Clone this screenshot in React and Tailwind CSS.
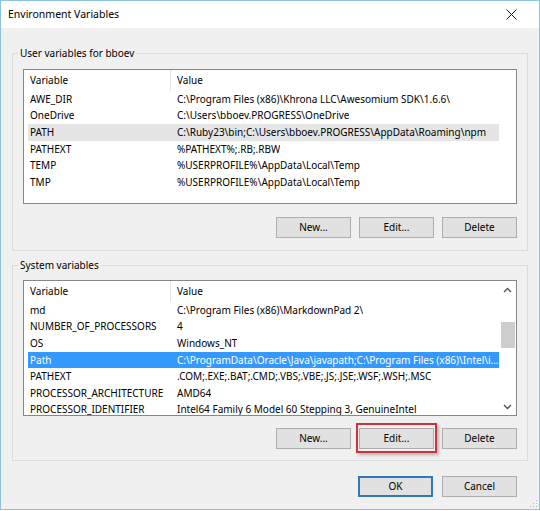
import React from 'react';

const userVars = [
  ['AWE_DIR', 'C:\\Program Files (x86)\\Khrona LLC\\Awesomium SDK\\1.6.6\\'],
  ['OneDrive', 'C:\\Users\\bboev.PROGRESS\\OneDrive'],
  ['PATH', 'C:\\Ruby23\\bin;C:\\Users\\bboev.PROGRESS\\AppData\\Roaming\\npm'],
  ['PATHEXT', '%PATHEXT%;.RB;.RBW'],
  ['TEMP', '%USERPROFILE%\\AppData\\Local\\Temp'],
  ['TMP', '%USERPROFILE%\\AppData\\Local\\Temp'],
];

const systemVars = [
  ['md', 'C:\\Program Files (x86)\\MarkdownPad 2\\'],
  ['NUMBER_OF_PROCESSORS', '4'],
  ['OS', 'Windows_NT'],
  ['Path', 'C:\\ProgramData\\Oracle\\Java\\javapath;C:\\Program Files (x86)\\Intel\\i...'],
  ['PATHEXT', '.COM;.EXE;.BAT;.CMD;.VBS;.VBE;.JS;.JSE;.WSF;.WSH;.MSC'],
  ['PROCESSOR_ARCHITECTURE', 'AMD64'],
  ['PROCESSOR_IDENTIFIER', 'Intel64 Family 6 Model 60 Stepping 3, GenuineIntel'],
];

function Button({ children, primary }) {
  return (
    <button
      className={
        primary
          ? 'w-[75px] h-[21px] bg-[#e1e1e1] border-2 border-[#2f78bb] flex items-center justify-center'
          : 'w-[75px] h-[21px] bg-[#e1e1e1] border border-[#adadad] flex items-center justify-center'
      }
    >
      {children}
    </button>
  );
}

function ListHeader() {
  return (
    <div className="flex h-[21px] items-center">
      <div className="w-[147px] h-full pl-[6px] flex items-center border-r border-[#e5e5e5]">Variable</div>
      <div className="pl-[6px]">Value</div>
    </div>
  );
}

function Row({ name, value, state }) {
  let cls = 'ml-[4px] flex h-[16.6px] items-center whitespace-nowrap overflow-hidden';
  if (state === 'hover') cls += ' bg-[#e5e5e5]';
  if (state === 'selected') cls += ' bg-[#3399ff] text-white';
  return (
    <div className={cls}>
      <div className="w-[143px] shrink-0 pl-[2px]">{name}</div>
      <div className="pl-[6px] overflow-hidden">{value}</div>
    </div>
  );
}

function Chevron({ down }) {
  return (
    <svg width="9" height="6" viewBox="0 0 9 6" className={down ? 'rotate-180' : ''}>
      <path d="M1 5 L4.5 1.5 L8 5" fill="none" stroke="#505050" strokeWidth="1.3" />
    </svg>
  );
}

export default function App() {
  return (
    <div
      className="w-[540px] h-[511px] bg-white text-[10px] text-black"
      style={{ fontFamily: '"Noto Sans", "Segoe UI", sans-serif' }}
    >
      <div className="relative w-[540px] h-[510px] border border-[#8cc3df] bg-[#f0f0f0] flex flex-col">
        {/* Title bar */}
        <div className="h-[27px] bg-white flex items-center justify-between pl-[7px] pr-[22px]">
          <span className="text-[10.5px]">Environment Variables</span>
          <svg width="11" height="11" viewBox="0 0 11 11">
            <path d="M0.5 0.5 L10.5 10.5 M10.5 0.5 L0.5 10.5" stroke="#111" strokeWidth="1" />
          </svg>
        </div>

        <div className="px-[11px] pt-[17px] flex flex-col">
          {/* User variables */}
          <fieldset className="min-w-0 border border-[#dcdcdc]">
            <legend className="ml-[5px] px-[2px] leading-[16px]">User variables for bboev</legend>
            <div className="px-[10px] pt-[8px] pb-[12px]">
              <div className="h-[135px] border border-[#828790] bg-white flex">
                <div className="flex-1 min-w-0">
                  <ListHeader />
                  {userVars.map(([n, v]) => (
                    <Row key={n} name={n} value={v} state={n === 'PATH' ? 'hover' : null} />
                  ))}
                </div>
                <div className="w-[17px]" />
              </div>
              <div className="mt-[13px] flex justify-end gap-[8px]">
                <Button>New...</Button>
                <Button>Edit...</Button>
                <Button>Delete</Button>
              </div>
            </div>
          </fieldset>

          {/* System variables */}
          <fieldset className="min-w-0 mt-[6px] border border-[#dcdcdc]">
            <legend className="ml-[5px] px-[2px] leading-[16px]">System variables</legend>
            <div className="px-[10px] pt-[7px] pb-[11px]">
              <div className="h-[136px] border border-[#828790] bg-white flex overflow-hidden">
                <div className="flex-1 min-w-0 overflow-hidden">
                  <ListHeader />
                  {systemVars.map(([n, v]) => (
                    <Row key={n} name={n} value={v} state={n === 'Path' ? 'selected' : null} />
                  ))}
                </div>
                <div className="w-[17px] bg-white flex flex-col">
                  <div className="h-[17px] flex items-center justify-center">
                    <Chevron />
                  </div>
                  <div className="flex-1 pt-[24px] pl-[2px] pr-[1px]">
                    <div className="h-[26px] bg-[#cdcdcd]" />
                  </div>
                  <div className="h-[17px] flex items-center justify-center">
                    <Chevron down />
                  </div>
                </div>
              </div>
              <div className="mt-[12px] flex justify-end gap-[8px]">
                <Button>New...</Button>
                <div className="relative">
                  <Button>Edit...</Button>
                  <span className="absolute -left-[3px] -right-[3px] -top-[5px] -bottom-[4px] border-2 border-[#c9343c] shadow-[2px_2px_3px_rgba(0,0,0,0.25)] pointer-events-none" />
                </div>
                <Button>Delete</Button>
              </div>
            </div>
          </fieldset>

          <div className="mt-[15px] pr-[11px] flex justify-end gap-[9px]">
            <Button primary>OK</Button>
            <Button>Cancel</Button>
          </div>
        </div>

        {/* resize grip */}
        <svg width="8" height="8" viewBox="0 0 8 8" className="absolute right-[1px] bottom-[1px]">
          <rect x="6" y="0" width="1" height="1" fill="#b8b8b8" />
          <rect x="3" y="3" width="1" height="1" fill="#b8b8b8" />
          <rect x="6" y="3" width="1" height="1" fill="#b8b8b8" />
          <rect x="0" y="6" width="1" height="1" fill="#b8b8b8" />
          <rect x="3" y="6" width="1" height="1" fill="#b8b8b8" />
          <rect x="6" y="6" width="1" height="1" fill="#b8b8b8" />
        </svg>
      </div>
    </div>
  );
}
